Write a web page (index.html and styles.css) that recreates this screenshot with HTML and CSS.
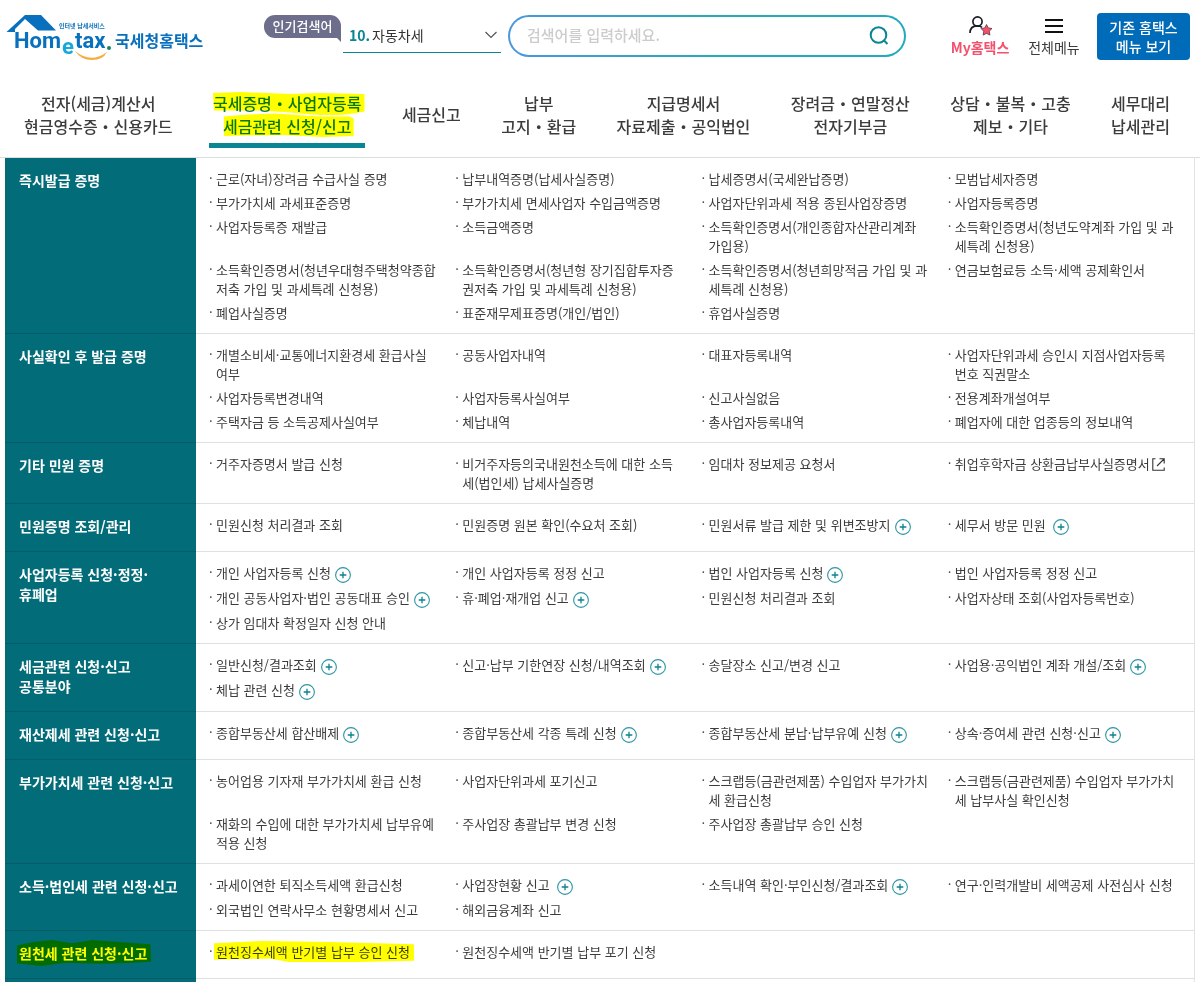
FILE: index.html
```html
<!DOCTYPE html>
<html lang="ko">
<head>
<meta charset="utf-8">
<meta name="viewport" content="width=device-width, initial-scale=1">
<title>국세청 홈택스</title>
<link rel="stylesheet" href="styles.css">
</head>
<body>
<svg class="defs" width="0" height="0" aria-hidden="true">
  <symbol id="plus" viewBox="0 0 16 16"><circle cx="8" cy="8" r="7.4" fill="none" stroke="#2d96a3" stroke-width="1.1"/><path d="M8 4.7v6.6M4.7 8h6.6" stroke="#0b8291" stroke-width="1.3"/></symbol>
  <symbol id="external" viewBox="0 0 13 13"><path d="M3.500.8H.8v11.4h11.4V9.500M5 8l7-7M7.500.8h4.700v4.700" fill="none" stroke="#333" stroke-width="1.1"/></symbol>
</svg>

<header class="top">
  <a class="logo" href="#" aria-label="홈택스 국세청홈택스">
    <svg width="210" height="48" viewBox="0 0 210 48">
      <path d="M25 2h16l15 15.500H38L25 6 15 16v3H6.500Z" fill="#0870bd"/>
      <text x="59" y="15" class="logo-tag">인터넷 납세서비스</text>
      <text x="14" y="35" class="logo-word">Hom</text>
      <text x="62" y="41" class="logo-e">e</text>
      <text x="75" y="35" class="logo-word">tax</text>
      <circle cx="109" cy="35" r="2" fill="#168463"/>
      <path d="M75 38q16 13 32 1-4 8-15 8T75 38Z" fill="#f5ad3b"/>
      <text x="115" y="34" class="logo-name">국세청홈택스</text>
    </svg>
  </a>
  <div class="popular">
    <span class="bubble">인기검색어</span>
    <button class="rank" type="button"><b>10.</b><span>자동차세</span>
      <svg width="12" height="8" viewBox="0 0 12 8"><path d="m.5 1 5.500 5.500L11.500 1" fill="none" stroke="#555" stroke-width="1.200"/></svg>
    </button>
  </div>
  <form class="search">
    <input type="text" aria-label="검색어" placeholder="검색어를 입력하세요.">
    <button type="button" aria-label="검색"><svg width="20" height="20" viewBox="0 0 20 20"><circle cx="9.500" cy="9" r="7.800" fill="none" stroke="#0a8593" stroke-width="2"/><path d="m14.500 14 4 4" stroke="#0a8593" stroke-width="2"/></svg></button>
  </form>
  <div class="tools">
    <a class="tool my" href="#"><svg width="24" height="20" viewBox="0 0 24 20"><circle cx="9.500" cy="5.500" r="4.600" fill="none" stroke="#1b1b28" stroke-width="1.700"/><path d="M2 17q0-7 7-7.200 3.500 0 5 1.500" fill="none" stroke="#1b1b28" stroke-width="1.700"/><path d="m18.500 8.500 1.800 3.400 3.700.6-2.700 2.700.6 3.900-3.400-1.700-3.400 1.700.6-3.900-2.700-2.700 3.700-.6Z" fill="#f4516c" stroke="#4a2a38" stroke-width=".7"/></svg><span>My홈택스</span></a>
    <a class="tool" href="#"><svg width="20" height="20" viewBox="0 0 20 20"><path d="M1 4h18M1 10h18M1 16h18" stroke="#111" stroke-width="2"/></svg><span>전체메뉴</span></a>
    <button class="old" type="button">기존 홈택스<br>메뉴 보기</button>
  </div>
</header>

<nav class="gnb">
  <a href="#">전자(세금)계산서<br>현금영수증・신용카드</a>
  <a href="#" class="active">국세증명・사업자등록<br>세금관련 신청/신고
    <svg class="marker" viewBox="0 0 156 48" preserveAspectRatio="none"><path d="M2 2 30 1l50 2 30-1 45 1v17q-22 5-53 3L80 21 50 19 3 19ZM13 25l24-2 28-1 45 3 30 0 4 2v17l-31 1-40-2-60 1Z" fill="#ff0"/></svg></a>
  <a href="#">세금신고</a>
  <a href="#">납부<br>고지・환급</a>
  <a href="#">지급명세서<br>자료제출・공익법인</a>
  <a href="#">장려금・연말정산<br>전자기부금</a>
  <a href="#">상담・불복・고충<br>제보・기타</a>
  <a href="#">세무대리<br>납세관리</a>
</nav>

<main class="panel">
  <section class="row"><h2>즉시발급 증명</h2><ul>
    <li><a href="#">근로(자녀)장려금 수급사실 증명</a></li><li><a href="#">납부내역증명(납세사실증명)</a></li><li><a href="#">납세증명서(국세완납증명)</a></li><li><a href="#">모범납세자증명</a></li>
    <li><a href="#">부가가치세 과세표준증명</a></li><li><a href="#">부가가치세 면세사업자 수입금액증명</a></li><li><a href="#">사업자단위과세 적용 종된사업장증명</a></li><li><a href="#">사업자등록증명</a></li>
    <li><a href="#">사업자등록증 재발급</a></li><li><a href="#">소득금액증명</a></li><li><a href="#">소득확인증명서(개인종합자산관리계좌<br>가입용)</a></li><li><a href="#">소득확인증명서(청년도약계좌 가입 및 과<br>세특례 신청용)</a></li>
    <li><a href="#">소득확인증명서(청년우대형주택청약종합<br>저축 가입 및 과세특례 신청용)</a></li><li><a href="#">소득확인증명서(청년형 장기집합투자증<br>권저축 가입 및 과세특례 신청용)</a></li><li><a href="#">소득확인증명서(청년희망적금 가입 및 과<br>세특례 신청용)</a></li><li><a href="#">연금보험료등 소득·세액 공제확인서</a></li>
    <li><a href="#">폐업사실증명</a></li><li><a href="#">표준재무제표증명(개인/법인)</a></li><li><a href="#">휴업사실증명</a></li>
  </ul></section>
  <section class="row"><h2>사실확인 후 발급 증명</h2><ul>
    <li><a href="#">개별소비세·교통에너지환경세 환급사실<br>여부</a></li><li><a href="#">공동사업자내역</a></li><li><a href="#">대표자등록내역</a></li><li><a href="#">사업자단위과세 승인시 지점사업자등록<br>번호 직권말소</a></li>
    <li><a href="#">사업자등록변경내역</a></li><li><a href="#">사업자등록사실여부</a></li><li><a href="#">신고사실없음</a></li><li><a href="#">전용계좌개설여부</a></li>
    <li><a href="#">주택자금 등 소득공제사실여부</a></li><li><a href="#">체납내역</a></li><li><a href="#">총사업자등록내역</a></li><li><a href="#">폐업자에 대한 업종등의 정보내역</a></li>
  </ul></section>
  <section class="row"><h2>기타 민원 증명</h2><ul>
    <li><a href="#">거주자증명서 발급 신청</a></li><li><a href="#">비거주자등의국내원천소득에 대한 소득<br>세(법인세) 납세사실증명</a></li><li><a href="#">임대차 정보제공 요청서</a></li><li><a href="#">취업후학자금 상환금납부사실증명서<svg class="ext"><use href="#external"/></svg></a></li>
  </ul></section>
  <section class="row"><h2>민원증명 조회/관리</h2><ul>
    <li><a href="#">민원신청 처리결과 조회</a></li><li><a href="#">민원증명 원본 확인(수요처 조회)</a></li><li><a href="#">민원서류 발급 제한 및 위변조방지<svg class="more"><use href="#plus"/></svg></a></li><li><a href="#">세무서 방문 민원 <svg class="more"><use href="#plus"/></svg></a></li>
  </ul></section>
  <section class="row"><h2>사업자등록 신청·정정·<br>휴폐업</h2><ul>
    <li><a href="#">개인 사업자등록 신청<svg class="more"><use href="#plus"/></svg></a></li><li><a href="#">개인 사업자등록 정정 신고</a></li><li><a href="#">법인 사업자등록 신청<svg class="more"><use href="#plus"/></svg></a></li><li><a href="#">법인 사업자등록 정정 신고</a></li>
    <li><a href="#">개인 공동사업자·법인 공동대표 승인<svg class="more"><use href="#plus"/></svg></a></li><li><a href="#">휴·폐업·재개업 신고<svg class="more"><use href="#plus"/></svg></a></li><li><a href="#">민원신청 처리결과 조회</a></li><li><a href="#">사업자상태 조회(사업자등록번호)</a></li>
    <li><a href="#">상가 임대차 확정일자 신청 안내</a></li>
  </ul></section>
  <section class="row"><h2>세금관련 신청·신고<br>공통분야</h2><ul>
    <li><a href="#">일반신청/결과조회<svg class="more"><use href="#plus"/></svg></a></li><li><a href="#">신고·납부 기한연장 신청/내역조회<svg class="more"><use href="#plus"/></svg></a></li><li><a href="#">송달장소 신고/변경 신고</a></li><li><a href="#">사업용·공익법인 계좌 개설/조회<svg class="more"><use href="#plus"/></svg></a></li>
    <li><a href="#">체납 관련 신청<svg class="more"><use href="#plus"/></svg></a></li>
  </ul></section>
  <section class="row"><h2>재산제세 관련 신청·신고</h2><ul>
    <li><a href="#">종합부동산세 합산배제<svg class="more"><use href="#plus"/></svg></a></li><li><a href="#">종합부동산세 각종 특례 신청<svg class="more"><use href="#plus"/></svg></a></li><li><a href="#">종합부동산세 분납·납부유예 신청<svg class="more"><use href="#plus"/></svg></a></li><li><a href="#">상속·증여세 관련 신청·신고<svg class="more"><use href="#plus"/></svg></a></li>
  </ul></section>
  <section class="row"><h2>부가가치세 관련 신청·신고</h2><ul>
    <li><a href="#">농어업용 기자재 부가가치세 환급 신청</a></li><li><a href="#">사업자단위과세 포기신고</a></li><li><a href="#">스크랩등(금관련제품) 수입업자 부가가치<br>세 환급신청</a></li><li><a href="#">스크랩등(금관련제품) 수입업자 부가가치<br>세 납부사실 확인신청</a></li>
    <li><a href="#">재화의 수입에 대한 부가가치세 납부유예<br>적용 신청</a></li><li><a href="#">주사업장 총괄납부 변경 신청</a></li><li><a href="#">주사업장 총괄납부 승인 신청</a></li>
  </ul></section>
  <section class="row"><h2>소득·법인세 관련 신청·신고</h2><ul>
    <li><a href="#">과세이연한 퇴직소득세액 환급신청</a></li><li><a href="#">사업장현황 신고 <svg class="more"><use href="#plus"/></svg></a></li><li><a href="#">소득내역 확인·부인신청/결과조회<svg class="more"><use href="#plus"/></svg></a></li><li><a href="#">연구·인력개발비 세액공제 사전심사 신청</a></li>
    <li><a href="#">외국법인 연락사무소 현황명세서 신고</a></li><li><a href="#">해외금융계좌 신고</a></li>
  </ul></section>
  <section class="row"><h2><span class="marked">원천세 관련 신청·신고<svg class="marker" viewBox="0 0 134 24" preserveAspectRatio="none"><path d="M0 5 15 2 35 0l20 3 20-3 30 2 28 2 1 16-20 1-30 1-35-1-25 3-20-2-24-2Z" fill="#ff0"/></svg></span></h2><ul>
    <li><a href="#" class="marked">원천징수세액 반기별 납부 승인 신청<svg class="marker" viewBox="0 0 208 20" preserveAspectRatio="none"><path d="M0 2 50 0l70 1 50 1 38 1v15l-60 1-70 0-20-3-58 1Z" fill="#ff0"/></svg></a></li><li><a href="#">원천징수세액 반기별 납부 포기 신청</a></li>
  </ul></section>
  <div class="row rest"></div>
</main>
</body>
</html>
```
FILE: styles.css
```css
* { box-sizing: border-box; }
body {
  margin: 0;
  min-height: 100vh;
  display: flex;
  flex-direction: column;
  background: #fff;
  color: #3c3c3c;
  font-family: "Noto Sans CJK KR", sans-serif;
  font-size: 13px;
}
a { color: inherit; text-decoration: none; }
button { font: inherit; border: 0; background: none; padding: 0; cursor: pointer; }
.defs { position: absolute; }

.top {
  display: flex;
  align-items: flex-start;
  padding: 13px 10px 0 0;
  height: 82px;
}
.logo { flex: none; width: 264px; }
.logo svg { display: block; }
.logo-word { font: bold 22px Roboto, sans-serif; fill: #0870bd; }
.logo-e { font: bold 22px Roboto, sans-serif; fill: #13a9da; }
.logo-tag { font-size: 6px; font-weight: 700; fill: #0870bd; }
.logo-name { font-size: 16px; font-weight: 700; fill: #0870bd; }

.popular { display: flex; flex: none; width: 244px; }
.bubble {
  position: relative;
  flex: none;
  width: 77px;
  height: 23px;
  margin-top: 2px;
  border-radius: 11px 11px 2px 11px;
  background: #6d6e8c;
  color: #fff;
  font-size: 13px;
  font-weight: 500;
  line-height: 22px;
  text-align: center;
}
.bubble::after {
  content: "";
  position: absolute;
  right: 0;
  top: 20px;
  border-left: 7px solid transparent;
  border-top: 7px solid #6d6e8c;
}
.rank {
  display: flex;
  align-items: center;
  width: 158px;
  height: 40px;
  margin-left: 2px;
  padding: 4px 4px 0 6px;
  border-bottom: 1px solid #0a8593;
  color: #333;
  font-size: 14px;
}
.rank b { color: #0a8593; margin-right: 2px; }
.rank svg { margin-left: auto; }

.search {
  display: flex;
  align-items: center;
  flex: 1;
  height: 42px;
  margin-top: 2px;
  padding: 0 15px 0 17px;
  border: 2px solid transparent;
  border-radius: 21px;
  background: linear-gradient(#fff, #fff) padding-box, linear-gradient(90deg, #4a97e0, #26abb8 50%, #22a9c0) border-box;
}
.search input {
  flex: 1;
  min-width: 0;
  border: 0;
  outline: 0;
  padding: 0 0 3px;
  background: none;
  font: 500 15px "Noto Sans CJK KR", sans-serif;
}
.search input::placeholder { color: #ccc; opacity: 1; }
.search button { display: flex; }

.tools { display: flex; flex: none; margin-left: 42px; }
.tool {
  display: flex;
  flex-direction: column;
  align-items: center;
  width: 64px;
  margin-right: 14px;
  padding-top: 3px;
  font-size: 14px;
  line-height: 22px;
  white-space: nowrap;
}
.tool + .tool { width: 56px; margin-right: 15px; }
.my { color: #f4516c; font-weight: 700; }
.old {
  width: 93px;
  height: 47px;
  border-radius: 4px;
  background: #006bb8;
  color: #fff;
  font-size: 14px;
  font-weight: 500;
  line-height: 19px;
}

.gnb {
  display: flex;
  justify-content: space-between;
  align-items: center;
  height: 76px;
  padding: 0 30px 10px 24px;
  border-bottom: 1px solid #ddd;
  font-size: 16px;
  font-weight: 500;
  line-height: 23px;
  text-align: center;
  white-space: nowrap;
}
.gnb a { position: relative; }
.active { color: #0a7885; }
.active::after {
  content: "";
  position: absolute;
  left: -4px;
  right: -4px;
  bottom: -10px;
  height: 5px;
  background: #0a8593;
}
.marker {
  position: absolute;
  left: -2px;
  top: -1px;
  width: calc(100% + 6px);
  height: calc(100% + 3px);
  mix-blend-mode: multiply;
  pointer-events: none;
}
h2 .marker { top: -3px; height: calc(100% + 6px); }

.panel {
  flex: 1;
  display: flex;
  flex-direction: column;
  margin: 0 5px;
  border-right: 1px solid #e3e3e3;
}
.row {
  display: grid;
  grid-template-columns: 191px 1fr;
  min-height: 48px;
  border-bottom: 1px solid #e0e0e0;
  background: linear-gradient(#026c79, #026c79) 0 0 / 191px 100% no-repeat border-box;
}
.rest { flex: 1; min-height: 0; border-bottom: 0; }
.row h2 {
  margin: 0 0 -1px;
  padding: 12px 0 0 14px;
  border-bottom: 1px solid #075b68;
  background: #026c79;
  color: #fff;
  font-size: 14px;
  font-weight: 700;
  line-height: 20px;
  white-space: nowrap;
}
.row ul {
  display: grid;
  grid-template-columns: repeat(4, 1fr);
  align-content: start;
  row-gap: 5px;
  margin: 0;
  padding: 11px 0 11px 13px;
  list-style: none;
}
.row li {
  position: relative;
  padding-left: 7px;
  line-height: 19px;
  white-space: nowrap;
}
.row li::before { content: "·"; position: absolute; left: 0; top: -1px; }
.row li a { display: inline-block; vertical-align: top; }
.more { width: 16px; height: 16px; margin: 4px 0 0 4px; vertical-align: top; }
.ext { width: 13px; height: 13px; margin: 4px 0 0 2px; vertical-align: top; }
.marked { position: relative; display: inline-block; }
```
